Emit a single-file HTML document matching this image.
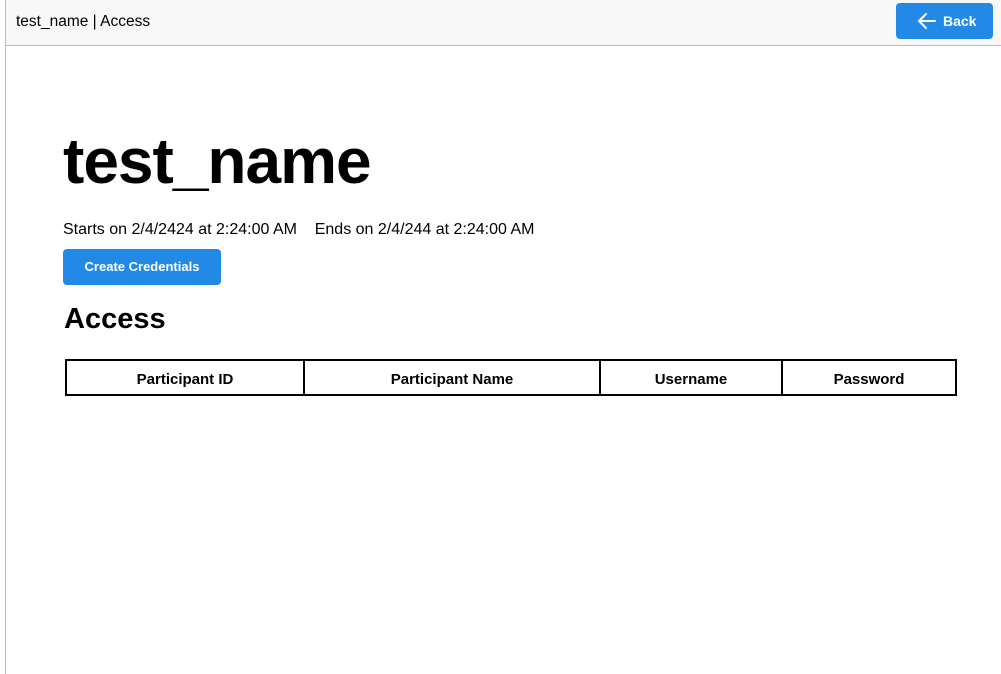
<!DOCTYPE html>
<html><head><style>
body{margin:0;width:1001px;height:674px;overflow:hidden;background:#fff;font-family:"Liberation Sans",sans-serif;color:#000;position:relative}
.lb{position:absolute;left:5px;top:0;width:1px;height:674px;background:#bbb}
.hdr{position:absolute;left:6px;top:0;width:995px;height:45px;background:#f8f8f8;border-bottom:1px solid #bbb}
.hdr .t{position:absolute;left:10px;top:13px;font-size:15.5px}
.back{position:absolute;left:890px;top:3px;width:97px;height:36px;background:#2289e6;border-radius:4px;color:#fff;font-weight:bold;font-size:14px}
.back span{position:absolute;left:47px;top:10px}
.back svg{position:absolute;left:22px;top:10px}
h1{position:absolute;left:63px;top:124px;margin:0;font-size:64px;font-weight:bold;letter-spacing:-1px;line-height:74px}
.dates{position:absolute;left:63px;top:221px;font-size:16px}
.btn{position:absolute;left:63px;top:249px;width:158px;height:36px;background:#2289e6;border-radius:4px;color:#fff;font-weight:bold;font-size:13px;text-align:center;line-height:36px}
h2{position:absolute;left:64px;top:301px;margin:0;font-size:29px;font-weight:bold;line-height:36px}
table{position:absolute;left:65px;top:359px;width:892px;height:37px;border-collapse:collapse}
td{border:2px solid #000;text-align:center;font-weight:bold;font-size:15px;padding:3px 0 0}
</style></head><body>
<div class="lb"></div>
<div class="hdr"><div class="t">test_name | Access</div>
<div class="back"><svg width="18" height="16" viewBox="0 0 18 16"><path d="M17 8H2M8 1L1 8l7 7" fill="none" stroke="#fff" stroke-width="2" stroke-linecap="round" stroke-linejoin="round"/></svg><span>Back</span></div></div>
<h1>test_name</h1>
<div class="dates">Starts on 2/4/2424 at 2:24:00 AM&nbsp;&nbsp;&nbsp; Ends on 2/4/244 at 2:24:00 AM</div>
<div class="btn">Create Credentials</div>
<h2>Access</h2>
<table><tr><td style="width:236px">Participant ID</td><td style="width:294px">Participant Name</td><td style="width:180px">Username</td><td>Password</td></tr></table>
</body></html>
